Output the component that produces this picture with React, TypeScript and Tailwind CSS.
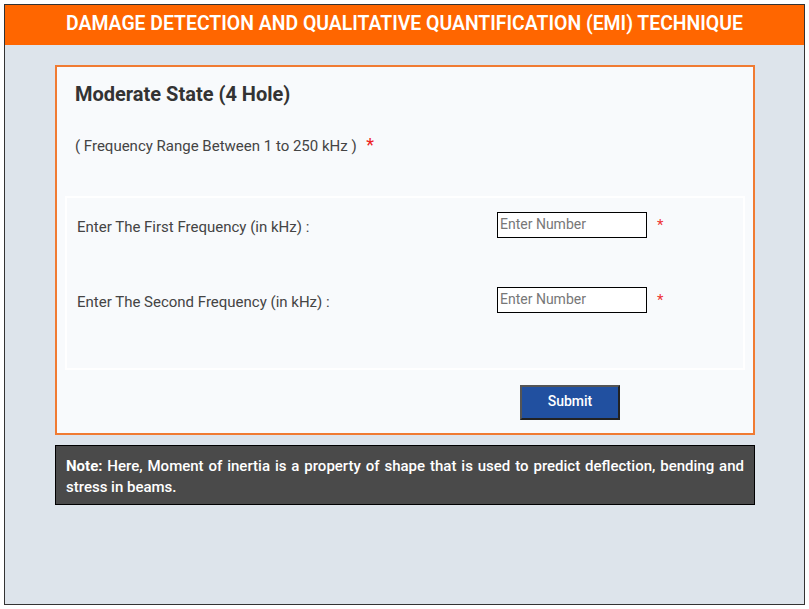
export default function App() {
  return (
    <div className="p-[4px] font-['Roboto',_'Liberation_Sans',_sans-serif]">
      <div className="h-[601px] w-[801px] border border-[#333] bg-[#dde4eb]">
        <div className="flex h-[40px] items-center justify-center bg-[#ff6600] pb-[2px] text-[19.4px] font-semibold text-white">
          DAMAGE DETECTION AND QUALITATIVE QUANTIFICATION (EMI) TECHNIQUE
        </div>
        <div className="ml-[50px] mt-[20px] w-[700px] border-2 border-[#f07b32] bg-[#f8fafc] pb-[13px]">
          <div className="pl-[18px] pt-[13px] text-[20px] font-bold leading-[28px] text-[#333]">
            Moderate State (4 Hole)
          </div>
          <div className="mt-[27px] pl-[18px] text-[15px] leading-[20px] text-[#444]">
            ( Frequency Range Between 1 to 250 kHz ) <span className="ml-[6px] text-[18px] text-[#ee2222]">*</span>
          </div>
          <div className="mx-[8px] mt-[40px] w-[680px] border-2 border-white pb-[55px] pt-[14px]">
            <div className="flex h-[26px] items-center">
              <div className="w-[430px] pl-[10px] pt-[4px] text-[15px] text-[#444]">Enter The First Frequency (in kHz) :</div>
              <input
                placeholder="Enter Number"
                className="h-[26px] w-[150px] border border-black bg-white px-[2px] pb-[2px] text-[14px] text-[#333] placeholder:text-[#777] outline-none"
              />
              <span className="ml-[10px] text-[15px] text-[#ee3333]">*</span>
            </div>
            <div className="mt-[49px] flex h-[26px] items-center">
              <div className="w-[430px] pl-[10px] pt-[4px] text-[15px] text-[#444]">Enter The Second Frequency (in kHz) :</div>
              <input
                placeholder="Enter Number"
                className="h-[26px] w-[150px] border border-black bg-white px-[2px] pb-[2px] text-[14px] text-[#333] placeholder:text-[#777] outline-none"
              />
              <span className="ml-[10px] text-[15px] text-[#ee3333]">*</span>
            </div>
          </div>
          <button className="ml-[463px] mt-[15px] flex h-[35px] w-[100px] items-center justify-center border-2 border-t-[#555] border-l-[#555] border-r-[#222] border-b-[#222] bg-[#2150a0] pb-[3px] text-[14px] font-medium text-white">
            Submit
          </button>
        </div>
        <div className="ml-[50px] mt-[10px] w-[700px] border border-black bg-[#4a4a4a] px-[10px] pb-[6px] pt-[10px] text-justify text-[15px] font-medium leading-[21px] text-white">
          <span className="font-bold">Note:</span> Here, Moment of inertia is a property of shape that is used to predict deflection, bending and stress in beams.
        </div>
      </div>
    </div>
  );
}
